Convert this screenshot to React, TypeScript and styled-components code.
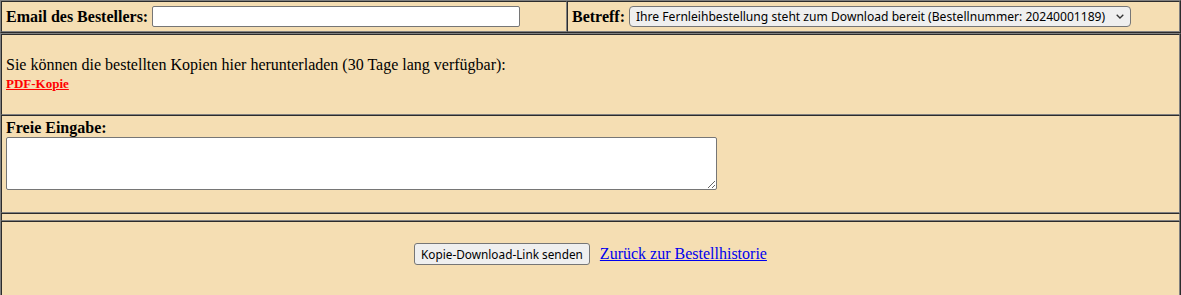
import React from "react";
import styled, { createGlobalStyle } from "styled-components";

const GlobalStyle = createGlobalStyle`
  html, body { margin: 0; padding: 0; background: #ffffff; }
  body { font-family: "Liberation Serif", "Times New Roman", serif; font-size: 16px; color: #000; }
`;

const Table = styled.div`
  border: 1px outset gray;
  background: #f5deb3;
  display: flex;
  flex-direction: column;
`;

const Row = styled.div`
  display: flex;
`;

const Cell = styled.div<{ $width?: number; $align?: "left" | "center" }>`
  border: 1px inset gray;
  padding: 3px 4px;
  flex: ${(p) => (p.$width ? `0 0 ${p.$width}px` : "1 1 auto")};
  box-sizing: border-box;
  text-align: ${(p) => p.$align || "left"};
  min-width: 0;
`;

const Field = styled.div`
  display: flex;
  align-items: center;
  gap: 4px;
  height: 23px;
`;

const Label = styled.b`
  font-family: "Liberation Serif", "Times New Roman", serif;
  font-size: 16px;
  font-weight: bold;
  white-space: nowrap;
`;

const TextInput = styled.input`
  box-sizing: border-box;
  width: 368px;
  height: 21px;
  margin: 0;
  border: 1px solid #767676;
  border-radius: 2px;
  background: #ffffff;
  padding: 1px 2px;
  font: 12px "Noto Sans", sans-serif;
`;

const SelectBox = styled.div`
  box-sizing: border-box;
  width: 502px;
  height: 21px;
  border: 1px solid #767676;
  border-radius: 4px;
  background: #efefef;
  display: flex;
  align-items: center;
  justify-content: space-between;
  padding: 0 6px 0 6px;
  font: 12.1px "Noto Sans", sans-serif;
  color: #000;
  white-space: nowrap;
  overflow: hidden;
`;

const Chevron = styled.svg`
  flex: 0 0 auto;
  width: 8px;
  height: 5px;
`;

const Notice = styled.div`
  font-size: 16px;
  line-height: 18px;
`;

const PdfLink = styled.a`
  color: #ff0000;
  font-weight: bold;
  font-size: 13px;
  text-decoration: underline;
`;

const TextArea = styled.textarea`
  display: block;
  box-sizing: border-box;
  width: 711px;
  height: 53px;
  margin: 0 0 19px 0;
  border: 1px solid #767676;
  border-radius: 2px;
  background: #ffffff;
  font: 13.33px "Liberation Mono", monospace;
`;

const Actions = styled.div`
  display: flex;
  justify-content: center;
  align-items: center;
  gap: 10px;
  padding: 18px 0 27px;
`;

const Button = styled.button`
  box-sizing: border-box;
  height: 22px;
  margin: 0;
  padding: 1px 6px;
  border: 1px solid #767676;
  border-radius: 3px;
  background: #efefef;
  font: 11.8px "Noto Sans", sans-serif;
  color: #000;
  white-space: nowrap;
`;

const BackLink = styled.a`
  color: #0000ee;
  text-decoration: underline;
  font-size: 16px;
  line-height: 22px;
  white-space: nowrap;
`;

export default function App() {
  return (
    <>
      <GlobalStyle />
      <Table>
        <Row>
          <Cell $width={566}>
            <Field>
              <Label>Email des Bestellers:</Label>
              <TextInput type="text" />
            </Field>
          </Cell>
          <Cell>
            <Field>
              <Label>Betreff:</Label>
              <SelectBox>
                <span>Ihre Fernleihbestellung steht zum Download bereit (Bestellnummer: 20240001189)</span>
                <Chevron viewBox="0 0 8 5">
                  <path d="M0.7 0.7 L4 4 L7.3 0.7" fill="none" stroke="#333" strokeWidth="1.3" />
                </Chevron>
              </SelectBox>
            </Field>
          </Cell>
        </Row>
      </Table>
      <Table>
        <Cell>
          <Notice>
            <br />
            Sie können die bestellten Kopien hier herunterladen (30 Tage lang verfügbar):
            <br />
            <PdfLink href="#">PDF-Kopie</PdfLink>
            <br />
            <br />
          </Notice>
        </Cell>
        <Cell>
          <Label>Freie Eingabe:</Label>
          <TextArea />
        </Cell>
        <Cell />
        <Cell $align="center">
          <Actions>
            <Button type="button">Kopie-Download-Link senden</Button>
            <BackLink href="#">Zurück zur Bestellhistorie</BackLink>
          </Actions>
        </Cell>
      </Table>
    </>
  );
}
